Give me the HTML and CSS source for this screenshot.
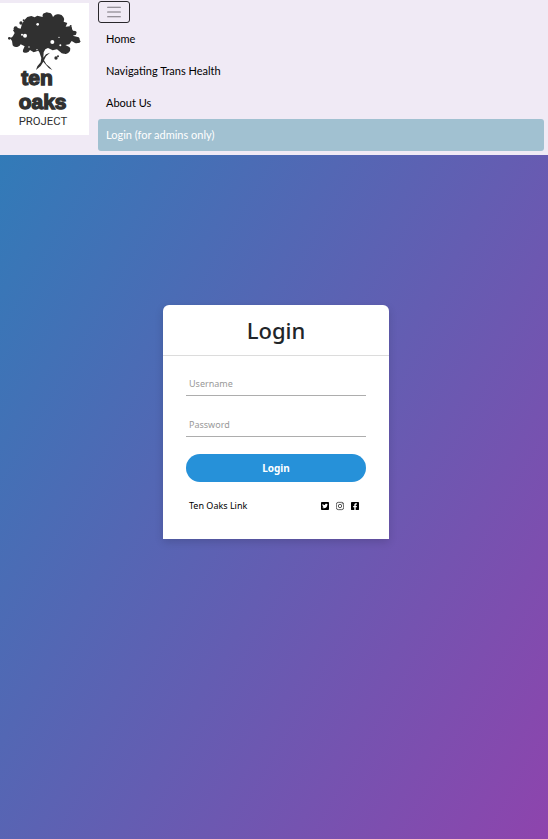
FILE: index.html
```html
<!DOCTYPE html>
<html lang="en">
<head>
    <meta charset="UTF-8">
    <meta name="viewport" content="width=device-width, initial-scale=1.0">
    <title>Login</title>
    <link rel="stylesheet" href="styles.css">
</head>
<body>
    <header class="navbar">
        <a class="navbar-brand" href="#" aria-label="Ten Oaks Project">
            <svg class="logo" viewBox="0 0 267 396">
                <g fill="#303030">
                    <path d="M28 104q8 2 11-5l5-9-5-8q3-8 12-8l11 3 4-14 8-13 8-8 12-3 10 4 8-5 16 4q-2-11 7-12 5-4 10-1 8-1 11 6l3 7q6-9 14-8 12-2 17 8 5 6 1 14l11 4-5 11 12-1q8 0 7 8l3 5q9 0 11 4l-2 8-10 3 18 5q5 3 2 14-6 6-13 3l-10-6-7 10-12 2 12 6q5 3 2 12-7 11-16 8-9 1-14-6l-9-7-13 3-14-7-8 4-5 9-1 16 8-10 12-5-12 11-6 12 7 12 10 8 8 9-10-5-12-14-5-6-8 13-14 12 4-11 10-12 2-13-6-17-3-5-14 5-11-7q-5 10-14 8-9 1-7-8l5-11-12-6q-4 9-12 8-9 1-12-5l-2-13-4-6z"/>
                    <circle cx="63" cy="60" r="5"/>
                    <circle cx="71" cy="52" r="3"/>
                    <circle cx="212" cy="69" r="3"/>
                    <circle cx="221" cy="88" r="4"/>
                    <circle cx="168" cy="165" r="5"/>
                    <circle cx="174" cy="160" r="3"/>
                    <circle cx="28" cy="106" r="4"/>
                    <circle cx="47" cy="76" r="6"/>
                    <circle cx="236" cy="115" r="5"/>
                </g>
                <g fill="#fff">
                    <circle cx="75" cy="98" r="6"/>
                    <circle cx="66" cy="95" r="3"/>
                    <circle cx="157" cy="117" r="6"/>
                    <circle cx="113" cy="64" r="4"/>
                    <circle cx="177" cy="103" r="2"/>
                    <circle cx="181" cy="127" r="3"/>
                    <circle cx="111" cy="140" r="2"/>
                    <circle cx="87" cy="132" r="2"/>
                </g>
                <text class="logo-name" x="64" y="246">ten</text>
                <text class="logo-name" x="56" y="319">oaks</text>
                <text class="logo-sub" x="56" y="367">PROJECT</text>
            </svg>
        </a>
        <nav class="navbar-menu">
            <button class="navbar-toggler" type="button" aria-label="Toggle navigation">
                <svg viewBox="0 0 30 30">
                    <path stroke="#77737b" stroke-width="2" stroke-linecap="round" d="M3 6h24M3 15h24M3 24h24"/>
                </svg>
            </button>
            <ul class="nav-list">
                <li><a class="nav-link" href="#">Home</a></li>
                <li><a class="nav-link" href="#">Navigating Trans Health</a></li>
                <li><a class="nav-link" href="#">About Us</a></li>
                <li><a class="nav-link active" href="#">Login (for admins only)</a></li>
            </ul>
        </nav>
    </header>

    <main class="content">
        <div class="card">
            <h1>Login</h1>
            <form class="login-form">
                <input type="text" name="username" placeholder="Username" aria-label="Username" required>
                <input type="password" name="password" placeholder="Password" aria-label="Password" required>
                <button class="login-button" type="submit">Login</button>
            </form>
            <div class="card-footer">
                <a href="#">Ten Oaks Link</a>
                <div class="social">
                    <a href="#" aria-label="Twitter">
                        <svg viewBox="0 0 448 512">
                            <path d="M400 32H48C21.500 32 0 53.500 0 80v352c0 26.500 21.500 48 48 48h352c26.500 0 48-21.500 48-48V80c0-26.500-21.500-48-48-48zm-48.900 158.800c.2 2.800.2 5.700.2 8.500 0 86.700-66 186.600-186.600 186.600-37.200 0-71.700-10.800-100.700-29.400 5.300.6 10.400.8 15.800.8 30.700 0 58.900-10.400 81.400-28-28.800-.6-53-19.500-61.300-45.500 10.100 1.500 19.200 1.500 29.600-1.200-30-6.100-52.500-32.500-52.500-64.400v-.8c8.700 4.900 18.900 7.900 29.600 8.300a65.400 65.400 0 0 1-29.200-54.600c0-12.200 3.200-23.400 8.900-33.100 32.300 39.800 80.800 65.800 135.200 68.600-9.300-44.500 24-80.600 64-80.600 18.900 0 35.900 7.900 47.900 20.700 14.800-2.800 29-8.300 41.600-15.800-4.900 15.200-15.200 28-28.800 36.100 13.200-1.400 26-5.100 37.800-10.200-8.900 13.100-20.100 24.700-32.900 34z"/>
                        </svg>
                    </a>
                    <a href="#" aria-label="Instagram">
                        <svg viewBox="0 0 448 512" fill="none" stroke="#000" stroke-width="36">
                            <rect x="20" y="52" width="408" height="408" rx="110"/>
                            <circle cx="224" cy="256" r="94"/>
                            <circle cx="343" cy="137" r="9"/>
                        </svg>
                    </a>
                    <a href="#" aria-label="Facebook">
                        <svg viewBox="0 0 448 512">
                            <path d="M400 32H48A48 48 0 0 0 0 80v352a48 48 0 0 0 48 48h137V328h-63v-72h63v-55c0-62 37-96 94-96 27 0 55 5 55 5v61h-31c-31 0-40 19-40 38v47h69l-11 72h-58v152h137a48 48 0 0 0 48-48V80a48 48 0 0 0-48-48z"/>
                        </svg>
                    </a>
                </div>
            </div>
        </div>
    </main>
</body>
</html>
```

FILE: styles.css
```css
* {
    box-sizing: border-box;
}
body {
    min-height: 100vh;
    margin: 0;
    background: linear-gradient(120deg, #2980b9, #8e44ad);
    font-family: "Noto Sans", "Open Sans", sans-serif;
    font-size: 9px;
}
a {
    color: #000;
    text-decoration: none;
}
.navbar {
    display: flex;
    gap: 9px;
    padding: 1px 4px 4px 0;
    background-color: #f0eaf5;
}
.navbar-brand {
    padding-top: 2px;
}
.logo {
    display: block;
    width: 89px;
    height: 132px;
    background-color: #fff;
}
.logo-name {
    font-family: "Liberation Sans Narrow", "Liberation Sans", sans-serif;
    font-size: 63px;
    font-weight: bold;
    fill: #303030;
    stroke: #303030;
    stroke-width: 4px;
}
.logo-sub {
    font-family: "Liberation Sans Narrow", "Roboto", sans-serif;
    font-size: 34px;
    fill: #303030;
}
.navbar-menu {
    flex: 1;
}
.navbar-toggler {
    display: block;
    padding: 2px 7px;
    background: none;
    border: 1px solid #29272b;
    border-radius: 3px;
}
.navbar-toggler svg {
    display: block;
    width: 16px;
    height: 16px;
}
.nav-list {
    margin: 0;
    padding: 0;
    list-style: none;
}
.nav-link {
    display: block;
    padding: 8px;
    font-family: "Lato", "Noto Sans", sans-serif;
    font-size: 11px;
    line-height: 16px;
    border-radius: 3px;
}
.nav-link.active {
    color: #fff;
    background-color: #a1c1d1;
}
.content {
    padding: 150px 12px 150px 16px;
}
.card {
    max-width: 226px;
    margin: 0 auto;
    background-color: #fff;
    border-radius: 6px 6px 0 0;
    box-shadow: 0 3px 8px rgba(0, 0, 0, 0.15);
}
h1 {
    margin: 0;
    padding: 10px 0;
    border-bottom: 1px solid #dcdcdc;
    color: #212529;
    font-size: 22px;
    font-weight: 500;
    line-height: 30px;
    text-align: center;
}
.login-form {
    display: flex;
    flex-direction: column;
    gap: 17px;
    padding: 16px 23px 0;
}
.login-form input {
    height: 24px;
    padding: 0 3px;
    background: none;
    border: none;
    border-bottom: 1px solid #adadad;
    font: inherit;
}
.login-form input::placeholder {
    color: #999;
}
.login-button {
    height: 28px;
    background-color: #2691d9;
    border: none;
    border-radius: 14px;
    color: #fff;
    font: inherit;
    font-size: 10px;
    font-weight: 700;
    cursor: pointer;
}
.card-footer {
    display: flex;
    align-items: center;
    justify-content: space-between;
    padding: 16px 30px 25px 26px;
    line-height: 16px;
}
.social {
    display: flex;
    gap: 7px;
}
.social svg {
    display: block;
    width: 8px;
    height: 10px;
}
```
